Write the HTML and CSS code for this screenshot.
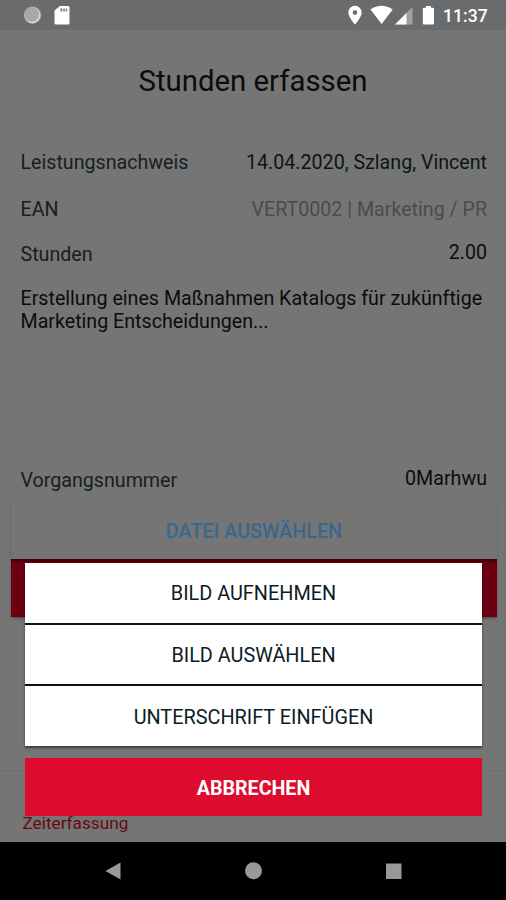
FILE: index.html
```html
<!DOCTYPE html>
<html lang="de">
<head>
<meta charset="utf-8">
<title>Stunden erfassen</title>
<link rel="stylesheet" href="styles.css">
</head>
<body>
<div class="screen">
  <header class="status">
    <svg class="status-left" width="60" height="30" viewBox="0 0 60 30">
      <circle cx="17.500" cy="15" r="9" fill="#858686"/>
      <circle cx="17.500" cy="15.200" r="8.200" fill="#d2d2d2"/>
      <circle cx="16.700" cy="14.300" r="7.200" fill="#a7a7a7"/>
      <path d="M45 6h8q1.500 0 1.500 1.500v15.500q0 1.500-1.500 1.500h-12q-1.500 0-1.500-1.500v-12.500z" fill="#fff"/>
      <path d="M45.500 8.500h1.800v3h-1.800zM48.300 8.500h1.500v3h-1.500zM50.700 8.500h1.500v3h-1.500z" fill="#77797a"/>
    </svg>
    <svg class="status-right" width="96" height="30" viewBox="344 0 96 30">
      <path fill-rule="evenodd" d="M355 5.800a6.700 6.700 0 0 1 6.700 6.700c0 4.700-6.700 12-6.700 12s-6.700-7.300-6.700-12a6.700 6.700 0 0 1 6.700-6.700zm0 4.500a2.300 2.300 0 1 0 0 4.600a2.300 2.300 0 0 0 0-4.600z" fill="#fff"/>
      <path d="M370.500 9.500Q381.500 2 392.700 9.500L381.600 24z" fill="#fff"/>
      <path d="M412.500 7v17.500h-17.500z" fill="#a0a1a2"/>
      <path d="M406.500 13v11.500h-11.500z" fill="#fff"/>
      <path d="M426 6h5v1.700h1.700q1.300 0 1.300 1.300v14.200q0 1.300-1.300 1.300h-8.600q-1.300 0-1.300-1.300v-14.200q0-1.300 1.300-1.300h1.900z" fill="#fff"/>
    </svg>
    <span class="clock">11:37</span>
  </header>
  <main class="page">
    <h1 class="title">Stunden erfassen</h1>
    <section class="form">
      <div class="row"><span class="label">Leistungsnachweis</span><span class="date">14.04.2020, Szlang, Vincent</span></div>
      <div class="row row-ean"><span class="label">EAN</span><span class="muted">VERT0002 | Marketing / PR</span></div>
      <div class="row row-hours"><span class="label">Stunden</span><span class="raised">2.00</span></div>
      <p class="note">Erstellung eines Maßnahmen Katalogs für zukünftige<br>Marketing Entscheidungen...</p>
      <div class="row"><span class="label">Vorgangsnummer</span><span class="raised">0Marhwu</span></div>
    </section>
    <div class="actions">
      <div class="pick">DATEI AUSWÄHLEN</div>
      <div class="submit"></div>
    </div>
    <footer class="tabs">Zeiterfassung</footer>
  </main>
  <nav class="nav">
    <svg width="506" height="58" viewBox="0 842 506 58">
      <path d="M120.500 862.500v17l-15-8.500z" fill="#999"/>
      <circle cx="253.500" cy="870.800" r="8.500" fill="#999"/>
      <path d="M386 863.500h15.500v15.500h-15.500z" fill="#999"/>
    </svg>
  </nav>
  <div class="sheet">
    <div class="options">
      <div class="option">BILD AUFNEHMEN</div>
      <div class="option">BILD AUSWÄHLEN</div>
      <div class="option">UNTERSCHRIFT EINFÜGEN</div>
    </div>
    <div class="cancel">ABBRECHEN</div>
  </div>
</div>
</body>
</html>
```
FILE: styles.css
```css
* { box-sizing: border-box; }
body { margin: 0; background: #757575; font: 19.850px/24px Roboto, "Liberation Sans", sans-serif; color: #0b0c0d; }
.screen { position: relative; width: 506px; height: 900px; overflow: hidden; display: flex; flex-direction: column; }
.status { height: 30px; background: #696b6c; display: flex; padding: 0 19px 0 15px; }
.status-left { margin-right: auto; }
.clock { width: 44px; margin-left: 3px; color: #fff; font-size: 17.600px; font-weight: 500; line-height: 32px; }
.page { flex: 1; display: flex; flex-direction: column; }
.title { margin: 0; height: 107px; padding-top: 33px; text-align: center; font-size: 29.350px; font-weight: 400; line-height: 36px; }
.form { height: 363px; padding: 14px 19px 0 20.500px; font-size: 19.650px; }
.row { display: flex; justify-content: space-between; height: 24px; white-space: nowrap; }
.label { color: #142024; }
.date { color: #0a1418; }
.muted { color: #4b4b4b; }
.row-ean { margin-top: 23px; }
.row-hours { margin-top: 21px; }
.raised { margin-top: -2px; }
.note { margin: 20px 0 0; height: 182px; line-height: 23px; white-space: nowrap; }
.actions { margin: 0 9px 0 11px; box-shadow: 0 2px 3px -1px rgba(0, 0, 0, .4), 0 0 1px rgba(0, 0, 0, .15); }
.pick { height: 59px; padding-top: 20px; text-align: center; color: #3a678c; font-size: 19.800px; font-weight: 500; }
.submit { height: 58px; background: linear-gradient(#4b0006 0, #4b0006 3px, #6d0010 4px); }
.tabs { margin-top: auto; height: 72px; border-top: 1px solid #6e6e6e; padding: 40px 0 0 22.500px; color: #690911; font-size: 17.200px; }
.nav { height: 58px; background: #000; }
.sheet { position: absolute; left: 25px; top: 563px; width: 457px; }
.options { background: #fff; height: 183px; display: flex; flex-direction: column; box-shadow: 0 2px 2px rgba(0, 0, 0, .5); }
.option { flex: 1; display: flex; justify-content: center; align-items: center; padding-top: 3px; color: #0c1b25; }
.option + .option { border-top: 2px solid #111; }
.cancel { margin-top: 12px; height: 58px; padding-top: 3px; background: #de0b2e; color: #fff; display: flex; justify-content: center; align-items: center; font-size: 19.650px; font-weight: 700; }
```
